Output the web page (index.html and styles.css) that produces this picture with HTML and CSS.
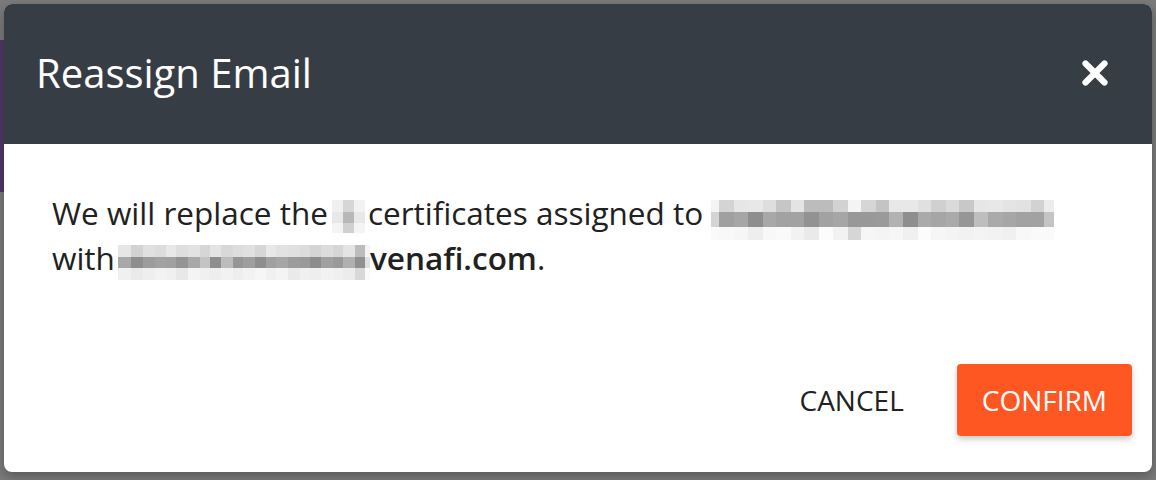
FILE: index.html
```html
<!DOCTYPE html>
<html lang="en">
<head>
<meta charset="utf-8">
<title>Reassign Email</title>
<link rel="stylesheet" href="styles.css">
</head>
<body>
<div class="backdrop">
  <div class="dialog" role="dialog" aria-labelledby="dlg-title">
    <header class="dialog-header">
      <h1 class="dialog-title" id="dlg-title">Reassign Email</h1>
      <button class="close-btn" aria-label="Close">
        <svg width="26" height="26" viewBox="0 0 26 26"><path d="M3.5 3.5 L22.5 22.5 M22.5 3.5 L3.5 22.5" stroke="#fff" stroke-width="6.2" stroke-linecap="round" fill="none"/></svg>
      </button>
    </header>
    <div class="dialog-body">
      <p class="message">We will replace the<span class="mosaic m1"><i class="r1"></i><i class="r2"></i><i class="r3"></i></span>certificates assigned to <span class="mosaic m2"><i class="r1"></i><i class="r2"></i><i class="r3"></i></span><br>with<span class="mosaic m3"><i class="r1"></i><i class="r2"></i><i class="r3"></i></span><b>venafi.com</b>.</p>
    </div>
    <footer class="dialog-actions">
      <button class="btn btn-text">CANCEL</button>
      <button class="btn btn-primary">CONFIRM</button>
    </footer>
  </div>
</div>
</body>
</html>
```

FILE: styles.css
```css
html, body {
  margin: 0;
  padding: 0;
}

body {
  font-family: "Open Sans", "Noto Sans", sans-serif;
  color: #212121;
}

.backdrop {
  width: 1156px;
  height: 480px;
  box-sizing: border-box;
  padding: 4px;
  background-color: #7b7b7b;
  background-image: linear-gradient(#52386a, #52386a);
  background-repeat: no-repeat;
  background-size: 4px 152px;
  background-position: 0 40px;
  overflow: hidden;
}

.dialog {
  width: 1148px;
  height: 468px;
  background: #fff;
  border-radius: 8px;
  box-shadow: 0 4px 12px rgba(0, 0, 0, 0.3);
  display: flex;
  flex-direction: column;
  overflow: hidden;
}

.dialog-header {
  height: 140px;
  flex: none;
  box-sizing: border-box;
  background: #373d45;
  display: flex;
  align-items: center;
  justify-content: space-between;
  padding: 0 44px 3px 32px;
}

.dialog-title {
  margin: 0;
  font-size: 40px;
  font-weight: 400;
  line-height: 40px;
  color: #fff;
}

.close-btn {
  width: 26px;
  height: 26px;
  padding: 0;
  border: 0;
  background: transparent;
  display: flex;
}

.dialog-body {
  padding: 46px 48px 0 48px;
}

.message {
  margin: 0;
  font-size: 31.5px;
  line-height: 45px;
  color: #212121;
}

.message b {
  font-weight: 600;
}

.mosaic {
  display: inline-block;
  vertical-align: top;
  margin-top: 10px;
}

.mosaic i {
  display: block;
}

.m1 {
  width: 33px;
  height: 33px;
  margin-left: 4px;
  margin-right: 3px;
}
.m1 .r1 { height: 12px; background: linear-gradient(to right, #f0f0f0 0 11px, #d6d6d6 11px 22px, #f2f2f2 22px 33px); }
.m1 .r2 { height: 11px; background: linear-gradient(to right, #e8e8e8 0 11px, #b8b8b8 11px 22px, #e8e8e8 22px 33px); }
.m1 .r3 { height: 10px; background: linear-gradient(to right, #f4f4f4 0 11px, #d0d0d0 11px 22px, #f4f4f4 22px 33px); }

.m2 {
  width: 343px;
  height: 40px;
  margin-bottom: -5px;
}
.m2 .r1 {
  height: 12px;
  background: linear-gradient(to right,
    #f4f4f4 0 8px, #d4d4d4 8px 23px, #e6e6e6 23px 37px, #e8e8e8 37px 52px, #dedede 52px 65px,
    #c6c6c6 65px 80px, #e4e4e4 80px 93px, #bcbcbc 93px 108px, #bcbcbc 108px 122px, #d2d2d2 122px 137px,
    #f4f4f4 137px 150px, #d6d6d6 150px 165px, #c4c4c4 165px 178px, #e8e8e8 178px 192px, #e8e8e8 192px 207px,
    #e0e0e0 207px 220px, #d0d0d0 220px 235px, #dadada 235px 248px, #c8c8c8 248px 263px, #e6e6e6 263px 277px,
    #e8e8e8 277px 292px, #e4e4e4 292px 305px, #e2e2e2 305px 320px, #d2d2d2 320px 333px, #ececec 333px 343px);
}
.m2 .r2 {
  height: 15px;
  background: linear-gradient(to right,
    #d4d4d4 0 8px, #a0a0a0 8px 23px, #a6a6a6 23px 37px, #8e8e8e 37px 52px, #a8a8a8 52px 65px,
    #a2a2a2 65px 80px, #a2a2a2 80px 93px, #929292 93px 108px, #a2a2a2 108px 122px, #a6a6a6 122px 137px,
    #989898 137px 150px, #989898 150px 165px, #9a9a9a 165px 178px, #b2b2b2 178px 192px, #8e8e8e 192px 207px,
    #aaaaaa 207px 220px, #a6a6a6 220px 235px, #aaaaaa 235px 248px, #969696 248px 263px, #bebebe 263px 277px,
    #aaaaaa 277px 292px, #a6a6a6 292px 305px, #a2a2a2 305px 320px, #a2a2a2 320px 333px, #c4c4c4 333px 343px);
}
.m2 .r3 {
  height: 13px;
  background: linear-gradient(to right,
    #fafafa 0 8px, #f8f8f8 8px 23px, #f6f6f6 23px 37px, #eeeeee 37px 52px, #f8f8f8 52px 65px,
    #fafafa 65px 80px, #f2f2f2 80px 93px, #eaeaea 93px 108px, #fcfcfc 108px 122px, #f2f2f2 122px 137px,
    #d6d6d6 137px 150px, #f6f6f6 150px 165px, #f4f4f4 165px 178px, #f6f6f6 178px 192px, #f0f0f0 192px 207px,
    #fcfcfc 207px 220px, #f6f6f6 220px 235px, #f4f4f4 235px 248px, #f2f2f2 248px 263px, #f4f4f4 263px 277px,
    #f2f2f2 277px 292px, #f0f0f0 292px 305px, #f8f8f8 305px 320px, #fafafa 320px 333px, #fafafa 333px 343px);
}

.m3 {
  width: 252px;
  height: 35px;
  margin-left: 3px;
}
.m3 .r1 {
  height: 12px;
  background: linear-gradient(to right,
    #e6e6e6 0 13px, #d2d2d2 13px 25px, #e0e0e0 25px 37px, #dcdcdc 37px 48px, #e8e8e8 48px 58px,
    #dedede 58px 70px, #e2e2e2 70px 82px, #d6d6d6 82px 92px, #e4e4e4 92px 103px, #d8d8d8 103px 115px,
    #dddddd 115px 125px, #e0e0e0 125px 137px, #d6d6d6 137px 148px, #e8e8e8 148px 158px, #e2e2e2 158px 170px,
    #e0e0e0 170px 182px, #dcdcdc 182px 192px, #d4d4d4 192px 203px, #dcdcdc 203px 215px, #d6d6d6 215px 225px,
    #e4e4e4 225px 237px, #bcbcbc 237px 247px, #f4f4f4 247px 252px);
}
.m3 .r2 {
  height: 11px;
  background: linear-gradient(to right,
    #a8a8a8 0 13px, #8e8e8e 13px 25px, #9c9c9c 25px 37px, #a2a2a2 37px 48px, #a0a0a0 48px 58px,
    #949494 58px 70px, #a8a8a8 70px 82px, #c4c4c4 82px 92px, #8e8e8e 92px 103px, #bcbcbc 103px 115px,
    #969696 115px 125px, #9e9e9e 125px 137px, #8e8e8e 137px 148px, #a0a0a0 148px 158px, #a6a6a6 158px 170px,
    #9c9c9c 170px 182px, #9a9a9a 182px 192px, #8c8c8c 192px 203px, #a0a0a0 203px 215px, #9a9a9a 215px 225px,
    #b0b0b0 225px 237px, #909090 237px 247px, #e0e0e0 247px 252px);
}
.m3 .r3 {
  height: 12px;
  background: linear-gradient(to right,
    #f0f0f0 0 13px, #eaeaea 13px 25px, #eeeeee 25px 37px, #f2f2f2 37px 48px, #f0f0f0 48px 58px,
    #e8e8e8 58px 70px, #f4f4f4 70px 82px, #f0f0f0 82px 92px, #eeeeee 92px 103px, #f2f2f2 103px 115px,
    #eeeeee 115px 125px, #f2f2f2 125px 137px, #f6f6f6 137px 148px, #f0f0f0 148px 158px, #f4f4f4 158px 170px,
    #eaeaea 170px 182px, #f0f0f0 182px 192px, #eeeeee 192px 203px, #f2f2f2 203px 215px, #f0f0f0 215px 225px,
    #ececec 225px 237px, #d8d8d8 237px 247px, #fafafa 247px 252px);
}

.dialog-actions {
  margin-top: auto;
  display: flex;
  justify-content: flex-end;
  gap: 28px;
  padding: 0 20px 36px 0;
}

.btn {
  font-family: "Open Sans", "Noto Sans", sans-serif;
  font-size: 28px;
  font-weight: 400;
  height: 72px;
  padding: 0 25px;
  border: 0;
  border-radius: 4px;
  background: transparent;
  color: #212121;
  cursor: pointer;
}

.btn-primary {
  background: #ff5722;
  color: #fff;
  box-shadow: 0 3px 6px rgba(0, 0, 0, 0.22);
}
```
